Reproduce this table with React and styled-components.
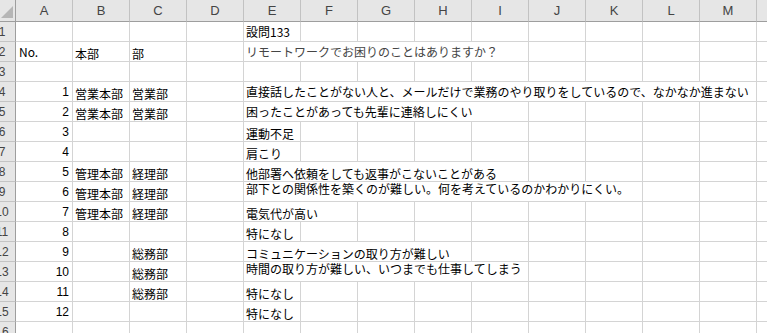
import React from "react";
import styled, { createGlobalStyle } from "styled-components";

const GlobalStyle = createGlobalStyle`
  body {
    margin: 0;
    background: #ffffff;
    overflow: hidden;
  }
`;

const COLS = ["A", "B", "C", "D", "E", "F", "G", "H", "I", "J", "K", "L", "M", "N"];

const ALIGN = { top: "flex-start", center: "center", bottom: "flex-end" };

const Sheet = styled.div`
  width: 767px;
  height: 333px;
  overflow: hidden;
  background: #ffffff;
`;

const Row = styled.div`
  display: grid;
  grid-template-columns: 16px repeat(14, 57px);
  height: ${({ $header }) => ($header ? "22px" : "20px")};
`;

const Corner = styled.div`
  box-sizing: border-box;
  background: #e6e6e6;
  border-right: 1px solid #9e9e9e;
  border-bottom: 1px solid #9e9e9e;
  display: flex;
  align-items: flex-end;
  justify-content: flex-end;
  padding: 0 2px 3px 0;
`;

const ColHead = styled.div`
  box-sizing: border-box;
  background: #e6e6e6;
  border-right: 1px solid #c2c2c2;
  border-bottom: 1px solid #9e9e9e;
  display: flex;
  align-items: center;
  justify-content: center;
  font-family: "Liberation Sans", Arial, sans-serif;
  font-size: 13px;
  color: #444444;
`;

const RowHead = styled.div`
  box-sizing: border-box;
  background: #e6e6e6;
  border-right: 1px solid #9e9e9e;
  border-bottom: 1px solid #c4c4c4;
  overflow: hidden;
  display: flex;
  align-items: center;
  font-family: "Liberation Sans", Arial, sans-serif;
  font-size: 12px;
  color: #444444;
`;

const RowLabel = styled.span`
  flex: none;
  width: 26px;
  margin-left: -11px;
  text-align: center;
`;

const Cell = styled.div`
  grid-column: span ${({ $span }) => $span || 1};
  box-sizing: border-box;
  border-right: 1px solid #d4d4d4;
  border-bottom: 1px solid #d4d4d4;
  display: flex;
  align-items: ${({ $v }) => ALIGN[$v || "bottom"]};
  justify-content: ${({ $num }) => ($num ? "flex-end" : "flex-start")};
  padding: ${({ $num, $pad }) => ($num ? "0 3px 0 0" : `0 0 0 ${$pad || 2}px`)};
  white-space: nowrap;
  overflow: hidden;
  font-family: ${({ $num }) =>
    $num
      ? `"Liberation Sans", Arial, sans-serif`
      : `"Noto Sans CJK JP", "Noto Sans", sans-serif`};
  font-size: 12px;
  line-height: 14px;
  color: ${({ $muted }) => ($muted ? "#454545" : "#000000")};
`;

const rows = [
  { e: { text: "設問133", v: "center" } },
  {
    a: { text: "No.", v: "center", pad: 3 },
    b: "本部",
    c: "部",
    e: { text: "リモートワークでお困りのことはありますか？", v: "center", span: 5, muted: true },
  },
  {},
  {
    n: 1, b: "営業本部", c: "営業部",
    e: { text: "直接話したことがない人と、メールだけで業務のやり取りをしているので、なかなか進まない", v: "center", span: 9 },
  },
  {
    n: 2, b: "営業本部", c: "営業部",
    e: { text: "困ったことがあっても先輩に連絡しにくい", v: "center", span: 5 },
  },
  { n: 3, e: { text: "運動不足" } },
  { n: 4, e: { text: "肩こり" } },
  {
    n: 5, b: "管理本部", c: "経理部",
    e: { text: "他部署へ依頼をしても返事がこないことがある", span: 5 },
  },
  {
    n: 6, b: "管理本部", c: "経理部",
    e: { text: "部下との関係性を築くのが難しい。何を考えているのかわかりにくい。", v: "top", span: 7 },
  },
  { n: 7, b: "管理本部", c: "経理部", e: { text: "電気代が高い", span: 2 } },
  { n: 8, e: { text: "特になし" } },
  { n: 9, c: "総務部", e: { text: "コミュニケーションの取り方が難しい", span: 4 } },
  {
    n: 10, c: "総務部",
    e: { text: "時間の取り方が難しい、いつまでも仕事してしまう", v: "top", span: 5 },
  },
  { n: 11, c: "総務部", e: { text: "特になし" } },
  { n: 12, e: { text: "特になし" } },
  {},
];

const SheetRow = ({ index, row }) => {
  const e = row.e || { text: "" };
  const span = e.span || 1;
  const rest = 14 - 4 - span;
  return (
    <Row>
      <RowHead>
        <RowLabel>{index}</RowLabel>
      </RowHead>
      {row.n != null ? (
        <Cell $num $v="center">{row.n}</Cell>
      ) : row.a ? (
        <Cell $v={row.a.v} $pad={row.a.pad}>{row.a.text}</Cell>
      ) : (
        <Cell />
      )}
      <Cell>{row.b}</Cell>
      <Cell>{row.c}</Cell>
      <Cell />
      <Cell $span={span} $v={e.v} $muted={e.muted}>{e.text}</Cell>
      {Array.from({ length: rest }).map((_, i) => (
        <Cell key={i} />
      ))}
    </Row>
  );
};

export default function App() {
  return (
    <Sheet>
      <GlobalStyle />
      <Row $header>
        <Corner>
          <svg width="12" height="12" viewBox="0 0 12 12">
            <polygon points="12,0 12,12 0,12" fill="#b6b6b6" />
          </svg>
        </Corner>
        {COLS.map((c) => (
          <ColHead key={c}>{c}</ColHead>
        ))}
      </Row>
      {rows.map((row, i) => (
        <SheetRow key={i} index={i + 1} row={row} />
      ))}
    </Sheet>
  );
}
